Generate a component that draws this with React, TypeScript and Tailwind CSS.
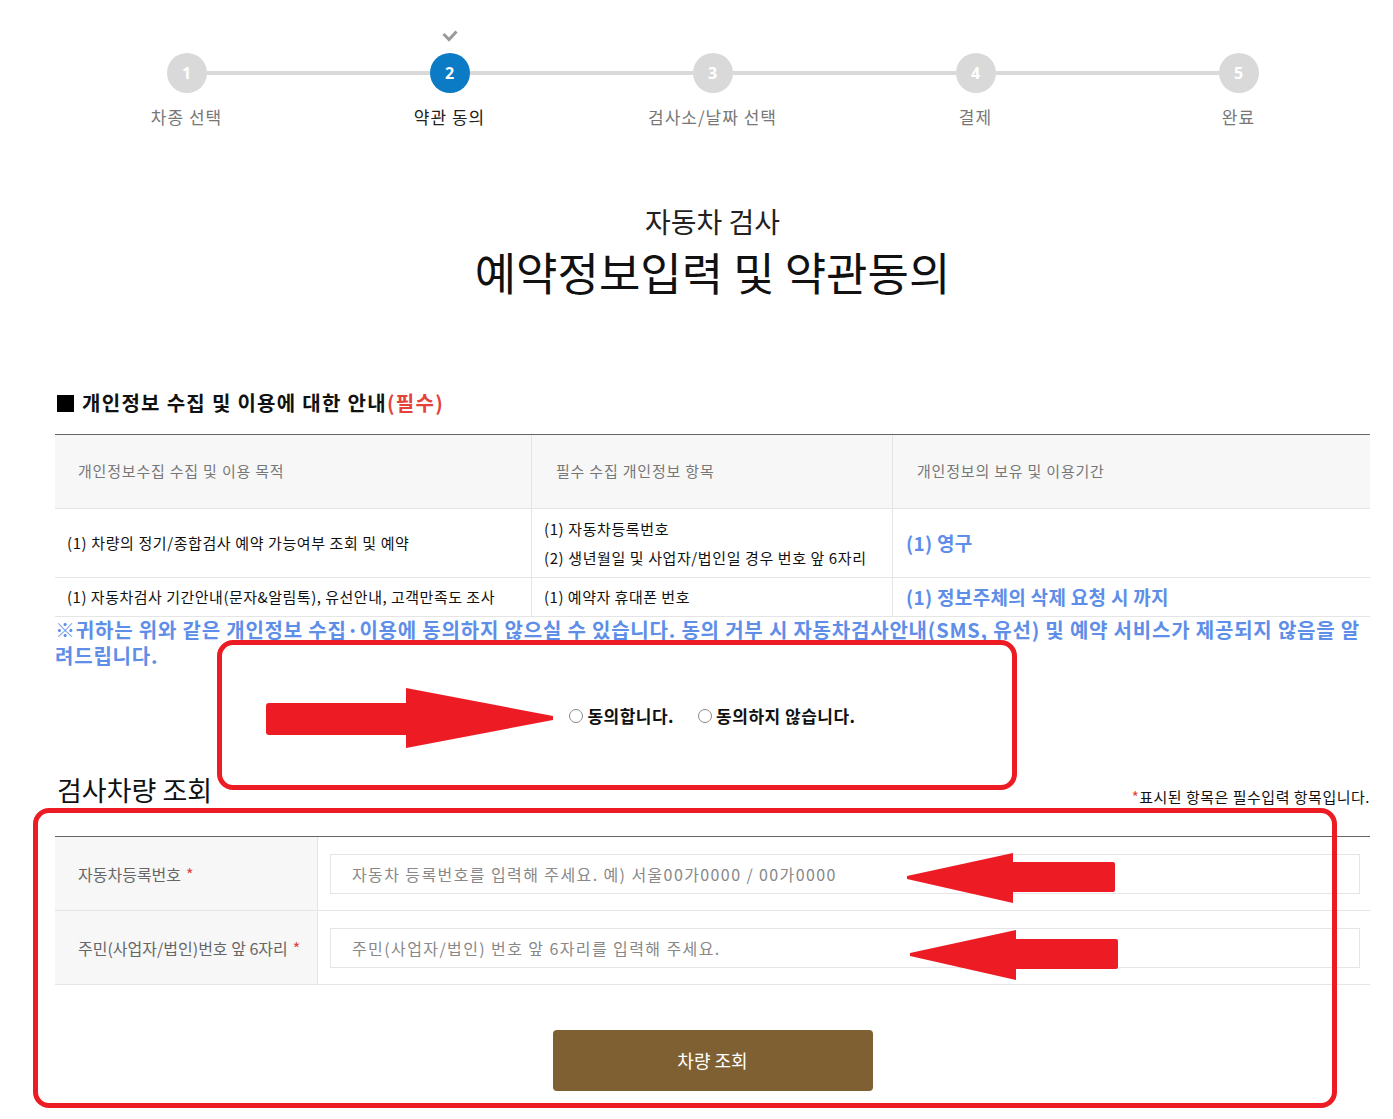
import React from 'react';

const FONT = { fontFamily: '"Noto Sans CJK KR", "Noto Sans", sans-serif' };
const NUM_FONT = { fontFamily: '"Open Sans", "Noto Sans", sans-serif' };

const STEPS = ['차종 선택', '약관 동의', '검사소/날짜 선택', '결제', '완료'];
const ACTIVE = 1;

const Stepper: React.FC = () => (
  <div className="grid grid-cols-5">
    {STEPS.map((label, i) => {
      const active = i === ACTIVE;
      return (
        <div key={label} className="flex flex-col items-center">
          <div className="h-[13px] flex items-center justify-center">
            {active && (
              <svg width="16" height="12" viewBox="0 0 16 12">
                <polyline points="1.5,4 7,9.5 14.5,1.5" fill="none" stroke="#9a9a9a" strokeWidth="3" />
              </svg>
            )}
          </div>
          <div className="mt-[11px] flex items-center w-full">
            <div className={`flex-1 h-[4px] ${i === 0 ? 'bg-transparent' : 'bg-[#d9d9d9]'}`}></div>
            <div
              className={`w-[40px] h-[40px] rounded-full flex items-center justify-center text-white text-[16px] font-bold ${active ? 'bg-[#0a7bc4]' : 'bg-[#d9d9d9]'}`}
              style={NUM_FONT}
            >
              {i + 1}
            </div>
            <div className={`flex-1 h-[4px] ${i === STEPS.length - 1 ? 'bg-transparent' : 'bg-[#d9d9d9]'}`}></div>
          </div>
          <div className={`mt-[12px] text-[17px] leading-[24px] tracking-[1px] ${active ? 'text-[#222]' : 'text-[#777]'}`}>{label}</div>
        </div>
      );
    })}
  </div>
);

const Radio: React.FC<{ label: string }> = ({ label }) => (
  <label className="flex items-center gap-[4px]">
    <span className="w-[14px] h-[14px] rounded-full border border-[#8a8a8a] bg-white inline-block"></span>
    <span className="text-[17px] font-bold text-[#111] tracking-[0.5px]">{label}</span>
  </label>
);

const RightArrow: React.FC<{ className: string }> = ({ className }) => (
  <svg className={className} width="292" height="64" viewBox="0 0 292 64">
    <rect x="2" y="17" width="146" height="32" rx="3" fill="#ed1c24" />
    <polygon points="142,2 289,30 289,34 142,62" fill="#ed1c24" />
  </svg>
);

const LeftArrow: React.FC<{ className: string }> = ({ className }) => (
  <svg className={className} width="212" height="52" viewBox="0 0 212 52">
    <rect x="104" y="9" width="106" height="30" rx="2" fill="#ed1c24" />
    <polygon points="108,0 108,50 2,26 2,23" fill="#ed1c24" />
  </svg>
);

export default function App() {
  return (
    <div className="relative min-h-[1119px] bg-white text-[#111]" style={FONT}>
      <div className="pl-[55px] pr-[23px] pt-[29px]">
        <Stepper />

        <div className="mt-[74px] text-center">
          <div className="text-[28px] leading-[36px] text-[#222]">자동차 검사</div>
          <div className="mt-[5px] text-[45px] leading-[56px] text-[#111]">예약정보입력 및 약관동의</div>
        </div>

        <h3 className="mt-[89px] flex items-center text-[20px] font-bold leading-[28px] pl-[2px] tracking-[1.3px]">
          <span className="w-[17px] h-[17px] bg-black inline-block mr-[8px]"></span>
          개인정보 수집 및 이용에 대한 안내<span className="text-[#e5423a]">(필수)</span>
        </h3>

        <div className="mt-[17px] border-t border-[#666]">
          <div className="grid grid-cols-[477px_361px_1fr] bg-[#f7f7f7] h-[73px] text-[15px] tracking-[0.8px] text-[#777]">
            <div className="flex items-center pl-[23px] border-r border-[#e5e5e5]">개인정보수집 수집 및 이용 목적</div>
            <div className="flex items-center pl-[24px] border-r border-[#e5e5e5]">필수 수집 개인정보 항목</div>
            <div className="flex items-center pl-[24px]">개인정보의 보유 및 이용기간</div>
          </div>
          <div className="grid grid-cols-[477px_361px_1fr] h-[69px] border-t border-[#e5e5e5] text-[15px] tracking-[0.6px]">
            <div className="flex items-center pl-[12px] border-r border-[#e5e5e5]">(1) 차량의 정기/종합검사 예약 가능여부 조회 및 예약</div>
            <div className="flex flex-col justify-center pl-[12px] border-r border-[#e5e5e5] leading-[29px]">
              <div>(1) 자동차등록번호</div>
              <div>(2) 생년월일 및 사업자/법인일 경우 번호 앞 6자리</div>
            </div>
            <div className="flex items-center pl-[13px] text-[19px] font-bold text-[#5e8ee8] tracking-[0.3px]">(1) 영구</div>
          </div>
          <div className="grid grid-cols-[477px_361px_1fr] h-[40px] border-y border-[#e5e5e5] text-[15px] tracking-[0.5px]">
            <div className="flex items-center pl-[12px] border-r border-[#e5e5e5]">(1) 자동차검사 기간안내(문자&amp;알림톡), 유선안내, 고객만족도 조사</div>
            <div className="flex items-center pl-[12px] border-r border-[#e5e5e5]">(1) 예약자 휴대폰 번호</div>
            <div className="flex items-center pl-[13px] text-[19px] font-bold text-[#5e8ee8] tracking-[0.3px]">(1) 정보주체의 삭제 요청 시 까지</div>
          </div>
        </div>

        <p className="text-[20px] font-bold leading-[26px] tracking-[0.8px] break-all text-[#5e8ee8]">
          ※귀하는 위와 같은 개인정보 수집·이용에 동의하지 않으실 수 있습니다. 동의 거부 시 자동차검사안내(SMS, 유선) 및 예약 서비스가 제공되지 않음을 알려드립니다.
        </p>

        <div className="mt-[35px] flex justify-center gap-[24px] h-[24px] items-center">
          <Radio label="동의합니다." />
          <Radio label="동의하지 않습니다." />
        </div>

        <div className="mt-[44px] flex items-end justify-between">
          <h3 className="text-[27px] leading-[36px] pl-[2px]">검사차량 조회</h3>
          <div className="text-[15px] leading-[20px] tracking-[0.5px] mb-[1px]">
            <span className="text-[#e5423a]">*</span>표시된 항목은 필수입력 항목입니다.
          </div>
        </div>

        <div className="mt-[28px] border-t border-[#666]">
          {[
            { label: '자동차등록번호', ph: '자동차 등록번호를 입력해 주세요. 예) 서울00가0000 / 00가0000' },
            { label: '주민(사업자/법인)번호 앞 6자리', ph: '주민(사업자/법인) 번호 앞 6자리를 입력해 주세요.' },
          ].map((row) => (
            <div key={row.label} className="grid grid-cols-[263px_1fr] h-[74px] border-b border-[#e5e5e5]">
              <div className="flex items-center pl-[23px] bg-[#f7f7f7] border-r border-[#e5e5e5] text-[16px] text-[#666]">
                {row.label}
                <span className="ml-[5px] text-[#e5423a]">*</span>
              </div>
              <div className="flex items-center pl-[12px] pr-[10px]">
                <input
                  className="w-full h-[40px] border border-[#e5e5e5] px-[21px] text-[16px] tracking-[1.4px] placeholder:text-[#888] outline-none"
                  style={FONT}
                  placeholder={row.ph}
                />
              </div>
            </div>
          ))}
        </div>

        <div className="mt-[45px] flex justify-center">
          <button className="w-[320px] h-[61px] rounded-[4px] bg-[#7f6032] text-white text-[18px]" style={FONT}>
            차량 조회
          </button>
        </div>
      </div>

      {/* annotation overlays */}
      <div className="absolute left-[217px] top-[640px] w-[800px] h-[150px] border-[5px] border-[#ed1c24] rounded-[16px] pointer-events-none"></div>
      <div className="absolute left-[33px] top-[808px] w-[1304px] h-[300px] border-[5px] border-[#ed1c24] rounded-[16px] pointer-events-none"></div>
      <RightArrow className="absolute left-[264px] top-[686px]" />
      <LeftArrow className="absolute left-[905px] top-[853px]" />
      <LeftArrow className="absolute left-[908px] top-[930px]" />
    </div>
  );
}
